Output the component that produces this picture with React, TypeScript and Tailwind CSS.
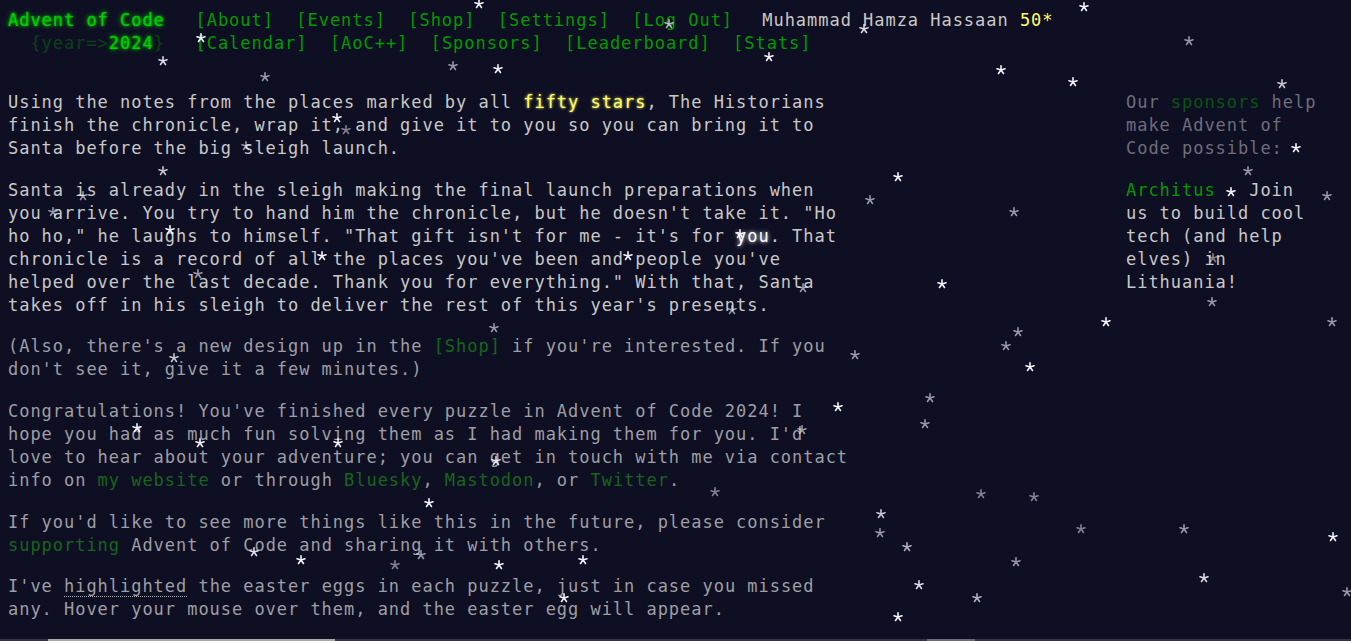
const stars: [number, number, number][] = [
  [479, 4, 1], [1084, 7, 1], [669, 24, 0.7], [864, 29, 0.9], [1189, 41, 0.6],
  [201, 38, 1], [163, 61, 0.9], [453, 66, 0.6], [498, 69, 1], [769, 57, 1],
  [265, 77, 0.6], [1001, 70, 1], [1073, 82, 1], [1282, 84, 0.8], [337, 118, 1],
  [346, 130, 0.5], [246, 146, 0.6], [1296, 148, 1], [163, 171, 0.8], [1248, 171, 0.6],
  [898, 177, 1], [870, 200, 0.6], [1231, 192, 1], [83, 196, 0.6], [53, 212, 0.6],
  [1014, 212, 0.6], [1327, 196, 0.6], [170, 230, 1], [322, 256, 1], [628, 256, 1],
  [740, 234, 1], [1213, 258, 0.5], [198, 274, 0.6], [942, 284, 1], [803, 288, 0.6],
  [732, 310, 0.6], [1212, 302, 0.6], [1106, 322, 1], [1332, 322, 0.6], [494, 328, 0.6],
  [1018, 332, 0.6], [1006, 346, 0.6], [855, 355, 0.6], [174, 358, 0.8], [1030, 367, 1],
  [930, 398, 0.6], [838, 407, 1], [925, 424, 0.6], [137, 428, 1], [200, 443, 1],
  [338, 443, 1], [802, 430, 0.6], [496, 461, 0.9], [715, 492, 0.5], [981, 494, 0.5],
  [1034, 497, 0.5], [429, 503, 1], [881, 514, 0.8], [1081, 529, 0.5], [1184, 529, 0.6],
  [880, 533, 0.6], [907, 547, 0.7], [1333, 537, 1], [254, 552, 0.9], [301, 560, 1],
  [395, 565, 0.5], [421, 555, 0.6], [499, 565, 1], [583, 560, 1], [1016, 562, 0.6],
  [1204, 578, 0.9], [919, 585, 0.9], [977, 598, 0.7], [564, 598, 1], [898, 617, 1],
  [1347, 592, 0.6],
]

function Star({ x, y, o }: { x: number; y: number; o: number }) {
  return (
    <svg
      className="absolute"
      style={{ left: x - 5, top: y - 5, opacity: o }}
      width="10"
      height="10"
      viewBox="0 0 10 10"
    >
      <g stroke="#f4f4ff" strokeWidth="1.6" strokeLinecap="round">
        <line x1="5" y1="5" x2="5" y2="0.8" />
        <line x1="5" y1="5" x2="9" y2="3.7" />
        <line x1="5" y1="5" x2="7.5" y2="8.5" />
        <line x1="5" y1="5" x2="2.5" y2="8.5" />
        <line x1="5" y1="5" x2="1" y2="3.7" />
      </g>
    </svg>
  )
}

const navTop = ["[About]", "[Events]", "[Shop]", "[Settings]", "[Log Out]"]
const navBottom = ["[Calendar]", "[AoC++]", "[Sponsors]", "[Leaderboard]", "[Stats]"]

export default function App() {
  const glowGreen = "text-[#00cc00] [text-shadow:0_0_2px_#00cc00,0_0_5px_#00cc00]"
  const dimLink = "text-[#17651c]"

  return (
    <div className="relative h-[641px] w-[1351px] overflow-hidden bg-[#0f0f23] font-['DejaVu_Sans_Mono',monospace] text-[17px] leading-[23px] tracking-[0.966px] text-[#c8c8c8] flex flex-col">
      {/* header */}
      <header className="pt-[9px]">
        <div className="flex whitespace-pre">
          <h1 className={`pl-[8px] pr-[19.5px] ${glowGreen}`}>Advent of Code</h1>
          <nav className="flex">
            {navTop.map((n) => (
              <span key={n} className="px-[11.2px] text-[#009900]">{n}</span>
            ))}
          </nav>
          <span className="ml-[18px]">
            Muhammad Hamza Hassaan <span className="text-[#ffff66]">50*</span>
          </span>
        </div>
        <div className="flex whitespace-pre">
          <h1 className="pl-[8px] pr-[19.5px]">
            <span className="text-[#009900]/35">{"  {year=>"}</span>
            <span className={glowGreen}>2024</span>
            <span className="text-[#009900]/35">{"}"}</span>
          </h1>
          <nav className="flex">
            {navBottom.map((n) => (
              <span key={n} className="px-[11.2px] text-[#009900]">{n}</span>
            ))}
          </nav>
        </div>
      </header>

      {/* main */}
      <div className="mt-[36px] flex justify-between">
        <article className="ml-[8px] w-[842px] flex flex-col gap-[18.67px]">
          <p>
            Using the notes from the places marked by all{" "}
            <span className="text-[#ffff66] [text-shadow:0_0_3px_#ffff66]">fifty stars</span>, The Historians
            finish the chronicle, wrap it, and give it to you so you can bring it to Santa before the big
            sleigh launch.
          </p>
          <p>
            Santa is already in the sleigh making the final launch preparations when you arrive. You try to
            hand him the chronicle, but he doesn't take it. "Ho ho ho," he laughs to himself. "That gift
            isn't for me - it's for{" "}
            <em className="not-italic text-white [text-shadow:0_0_4px_#ffffff]">you</em>. That chronicle is a
            record of all the places you've been and people you've helped over the last decade. Thank you
            for everything." With that, Santa takes off in his sleigh to deliver the rest of this year's
            presents.
          </p>
          <p className="text-[#9e9ea4]">
            (Also, there's a new design up in the <span className={dimLink}>[Shop]</span> if you're
            interested. If you don't see it, give it a few minutes.)
          </p>
          <p className="text-[#9e9ea4]">
            Congratulations! You've finished every puzzle in Advent of Code 2024! I hope you had as much fun
            solving them as I had making them for you. I'd love to hear about your adventure; you can get
            in touch with me via contact info on <span className={dimLink}>my website</span> or through{" "}
            <span className={dimLink}>Bluesky</span>, <span className={dimLink}>Mastodon</span>, or{" "}
            <span className={dimLink}>Twitter</span>.
          </p>
          <p className="text-[#9e9ea4]">
            If you'd like to see more things like this in the future, please consider{" "}
            <span className={dimLink}>supporting</span> Advent of Code and sharing it with others.
          </p>
          <p className="text-[#9e9ea4]">
            I've <span className="border-b border-dotted border-[#b0b0b0]">highlighted</span> the easter eggs
            in each puzzle, just in case you missed any. Hover your mouse over them, and the easter egg will
            appear.
          </p>
        </article>

        <aside className="mr-[25px] w-[200px] flex flex-col gap-[18.67px]">
          <p className="text-[#6d6d7b]">
            Our <span className="text-[#075411]">sponsors</span> help make Advent of Code possible:
          </p>
          <p>
            <span className="text-[#009900]">Architus</span> - Join us to build cool tech (and help elves) in
            Lithuania!
          </p>
        </aside>
      </div>

      {/* bottom edge */}
      <div className="mt-auto h-[2px] bg-[#34343e] flex">
        <div className="ml-[48px] w-[287px] bg-[#a8a8a8]" />
        <div className="ml-[592px] w-[48px] bg-[#6a6a70]" />
      </div>

      {/* falling stars */}
      <div className="pointer-events-none absolute inset-0">
        {stars.map(([x, y, o], i) => (
          <Star key={i} x={x} y={y} o={o} />
        ))}
      </div>
    </div>
  )
}
